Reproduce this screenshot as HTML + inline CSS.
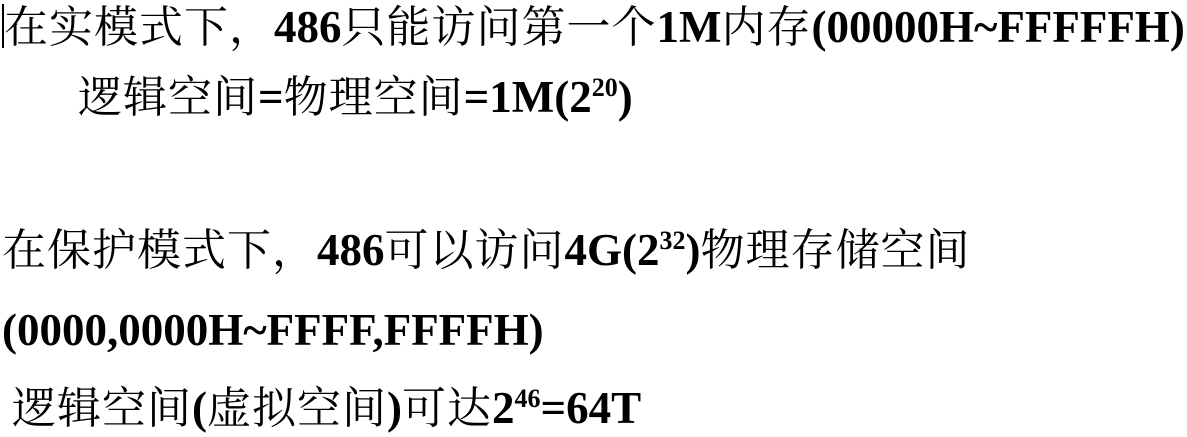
<!DOCTYPE html>
<html><head><meta charset="utf-8"><style>
html,body{margin:0;padding:0;background:#fff;}
body{width:1187px;height:437px;position:relative;overflow:hidden;color:#000;
font-family:"Liberation Serif","Noto Serif CJK SC",serif;font-size:44px;}
.l{position:absolute;white-space:nowrap;line-height:1;letter-spacing:1px;}
b{font-weight:bold;font-size:45px;letter-spacing:0;}
sup{font-size:26px;vertical-align:0;position:relative;top:-16px;font-weight:bold;}
.cur{position:absolute;left:2px;top:4px;width:2px;height:44px;background:#000;}
</style></head><body>
<div class="cur"></div>
<div class="l" style="left:4px;top:5px;">在实模式下，<b>486</b>只能访问第一个<b>1M</b>内存<b>(00000H~FFFFFH)</b></div>
<div class="l" style="left:78px;top:75px;">逻辑空间<b>=</b>物理空间<b>=1M(2<sup>20</sup>)</b></div>
<div class="l" style="left:2px;top:228px;">在保护模式下，<b>486</b>可以访问<b>4G(2<sup>32</sup>)</b>物理存储空间</div>
<div class="l" style="left:2px;top:308px;"><b>(0000,0000H~FFFF,FFFFH)</b></div>
<div class="l" style="left:12px;top:386px;">逻辑空间<b>(</b>虚拟空间<b>)</b>可达<b>2<sup>46</sup>=64T</b></div>
</body></html>
